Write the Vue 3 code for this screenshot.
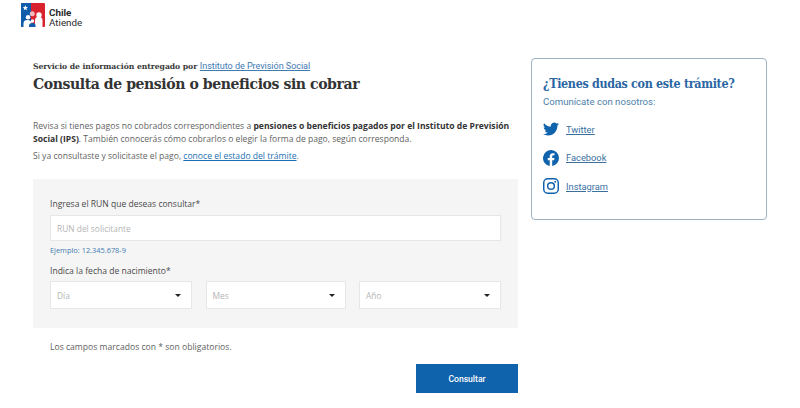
<script setup>
const selects = ['Día', 'Mes', 'Año']
</script>

<template>
  <div class="page">
    <header class="top">
      <svg class="logo" width="24" height="24" viewBox="0 0 24 24">
        <rect width="24" height="24" rx="1" fill="#d8232f" />
        <path d="M0 1a1 1 0 0 1 1-1h9v11.500c0 4-1.500 4.500-4 5.500H0z" fill="#0f5cab" />
        <path d="M0 17h7l3-2v9H1a1 1 0 0 1-1-1z" fill="#0f5cab" />
        <path d="M4.300 2.200l.8 1.800 1.900.1-1.500 1.200.5 1.900-1.700-1-1.600 1 .5-1.900L1.700 4.100l1.900-.1z" fill="#fff" />
        <circle cx="11.300" cy="10.800" r="2.500" fill="#f3b9bd" />
        <circle cx="18" cy="12" r="2.700" fill="#fff" />
        <path d="M14 24v-6.500a3.500 3.500 0 0 1 7.500 0V24z" fill="#fff" />
        <circle cx="7" cy="14.200" r="2.200" fill="#fff" />
        <path d="M2.500 24v-3.500c0-2.500 2-3.600 4-3.500 2 0 3 1 4 1.800V24z" fill="#fff" />
        <circle cx="11.500" cy="18" r="1.700" fill="#fff" />
        <path d="M8 24v-1.500c0-1.700 1.500-2.500 3.500-2.500s3 1 3 2.500V24z" fill="#0f5cab" />
      </svg>
      <div class="brand"><b>Chile</b><span>Atiende</span></div>
    </header>

    <div class="columns">
      <main class="main">
        <p class="service">Servicio de información entregado por <a href="#">Instituto de Previsión Social</a></p>
        <h1>Consulta de pensión o beneficios sin cobrar</h1>
        <p class="intro">Revisa si tienes pagos no cobrados correspondientes a <b>pensiones o beneficios pagados por el Instituto de Previsión Social (IPS)</b>. También conocerás cómo cobrarlos o elegir la forma de pago, según corresponda.</p>
        <p class="intro second">Si ya consultaste y solicitaste el pago, <a href="#">conoce el estado del trámite</a>.</p>

        <section class="panel">
          <label class="label">Ingresa el RUN que deseas consultar*</label>
          <div class="field run">RUN del solicitante</div>
          <div class="hint">Ejemplo: 12.345.678-9</div>
          <label class="label date-label">Indica la fecha de nacimiento*</label>
          <div class="dates">
            <div v-for="s in selects" :key="s" class="field select">
              <span>{{ s }}</span>
              <i class="caret"></i>
            </div>
          </div>
        </section>

        <p class="required">Los campos marcados con * son obligatorios.</p>
        <div class="actions"><button type="button">Consultar</button></div>
      </main>

      <aside class="card">
        <h2>¿Tienes dudas con este trámite?</h2>
        <p class="contact">Comunícate con nosotros:</p>
        <a class="social" href="#">
          <svg width="16" height="16" viewBox="0 0 24 24"><path fill="#0f62ac" d="M24 4.600a9.800 9.800 0 0 1-2.800.8 4.900 4.900 0 0 0 2.200-2.700 9.900 9.900 0 0 1-3.100 1.200 4.900 4.900 0 0 0-8.400 4.500A14 14 0 0 1 1.700 3.200a4.900 4.900 0 0 0 1.500 6.600 4.900 4.900 0 0 1-2.200-.6v.1a4.900 4.900 0 0 0 3.900 4.800 4.900 4.900 0 0 1-2.200.1 4.900 4.900 0 0 0 4.600 3.400A9.900 9.900 0 0 1 0 19.600 14 14 0 0 0 7.500 21.800c9.100 0 14-7.500 14-14v-.6A10 10 0 0 0 24 4.600z"/></svg>
          <span>Twitter</span>
        </a>
        <a class="social" href="#">
          <svg width="16" height="16" viewBox="0 0 24 24"><path fill="#0f62ac" d="M24 12a12 12 0 1 0-13.900 11.900v-8.400H7.100V12h3V9.400c0-3 1.800-4.700 4.500-4.700 1.300 0 2.700.2 2.700.2v3h-1.500c-1.500 0-2 .9-2 1.900V12h3.400l-.5 3.500h-2.900v8.400A12 12 0 0 0 24 12z"/></svg>
          <span>Facebook</span>
        </a>
        <a class="social" href="#">
          <svg width="16" height="16" viewBox="0 0 24 24" fill="none" stroke="#0f62ac" stroke-width="2.200"><rect x="1.100" y="1.100" width="21.800" height="21.800" rx="6"/><circle cx="12" cy="12" r="5"/><circle cx="18.300" cy="5.700" r="1.400" fill="#0f62ac" stroke="none"/></svg>
          <span>Instagram</span>
        </a>
      </aside>
    </div>
  </div>
</template>

<style>
html, body { margin: 0; background: #fff; }
</style>

<style scoped>
.page { width: 800px; height: 408px; overflow: hidden; box-sizing: border-box; padding: 3px 33px 0 21px; font-family: "Open Sans", sans-serif; color: #4a4a4a; }
.top { display: flex; align-items: center; height: 24px; gap: 4px; }
.logo { flex: none; }
.brand { display: flex; flex-direction: column; font-family: Roboto, sans-serif; font-size: 9.800px; line-height: 9.500px; color: #2b2b2b; margin-top: 5px; }
.brand b { font-weight: 700; }
.columns { display: flex; gap: 13px; margin: 31px 0 0 12px; align-items: flex-start; }
.main { width: 485px; flex: none; padding-top: 3px; }
.service { margin: 0; font: 700 7.700px/10px "DejaVu Serif", serif; color: #3a3a3a; letter-spacing: -0.060px; }
.service a { font: 400 9.100px/10px Roboto, sans-serif; color: #3f7cb3; }
h1 { margin: 1px 0 0; font: 700 15.600px/22px "DejaVu Serif Condensed", "DejaVu Serif", serif; font-stretch: condensed; color: #333; letter-spacing: -0.420px; white-space: nowrap; }
.intro { margin: 25px 0 0; font-size: 8.580px; line-height: 13px; color: #5f5f5f; }
.intro b { color: #333; }
.intro a { color: #1c6fb0; }
.intro.second { margin-top: 4px; }
.panel { margin-top: 16px; height: 149px; box-sizing: border-box; padding: 19px 17px 0; background: #f5f5f5; }
.label { display: block; font-size: 8.550px; line-height: 12px; color: #4a4a4a; }
.field { box-sizing: border-box; height: 26px; padding: 0 6px; display: flex; align-items: center; background: #fff; border: 1px solid #e6e6e6; font-size: 8.400px; color: #b5b5b5; }
.run { margin-top: 5px; }
.hint { margin-top: 4px; font-size: 7.400px; line-height: 10px; color: #3f7cb3; }
.date-label { margin-top: 10px; }
.dates { display: grid; grid-template-columns: 142px 140px 142px; gap: 13.500px; }
.select { height: 28px; margin-top: 4px; justify-content: space-between; padding-right: 10px; }
.caret { width: 0; height: 0; border: 3px solid transparent; border-top: 3.500px solid #222; border-bottom: 0; }
.required { margin: 13px 0 0 17px; font-size: 8.600px; line-height: 12px; color: #5f5f5f; }
.actions { display: flex; justify-content: flex-end; margin-top: 11px; }
button { width: 102px; height: 29px; border: 0; background: #0f62ac; color: #fff; font: 500 8.600px Roboto, sans-serif; }
.card { box-sizing: border-box; width: 236px; height: 162px; padding: 16px 11px 0; border: 1px solid #9db3c4; border-radius: 4px; }
h2 { margin: 0; font: 700 12.400px/18px "DejaVu Serif Condensed", "DejaVu Serif", serif; font-stretch: condensed; color: #2a66a3; letter-spacing: -0.320px; white-space: nowrap; }
.contact { margin: 2px 0 0; font: 400 9.600px/14px Roboto, sans-serif; color: #4e7fa9; }
.social { display: flex; align-items: center; gap: 7px; height: 18px; margin-top: 10.500px; font: 400 9.300px Roboto, sans-serif; color: #3a6f9f; text-decoration: underline; }
.contact + .social { margin-top: 11px; }
.social svg { flex: none; }
</style>
